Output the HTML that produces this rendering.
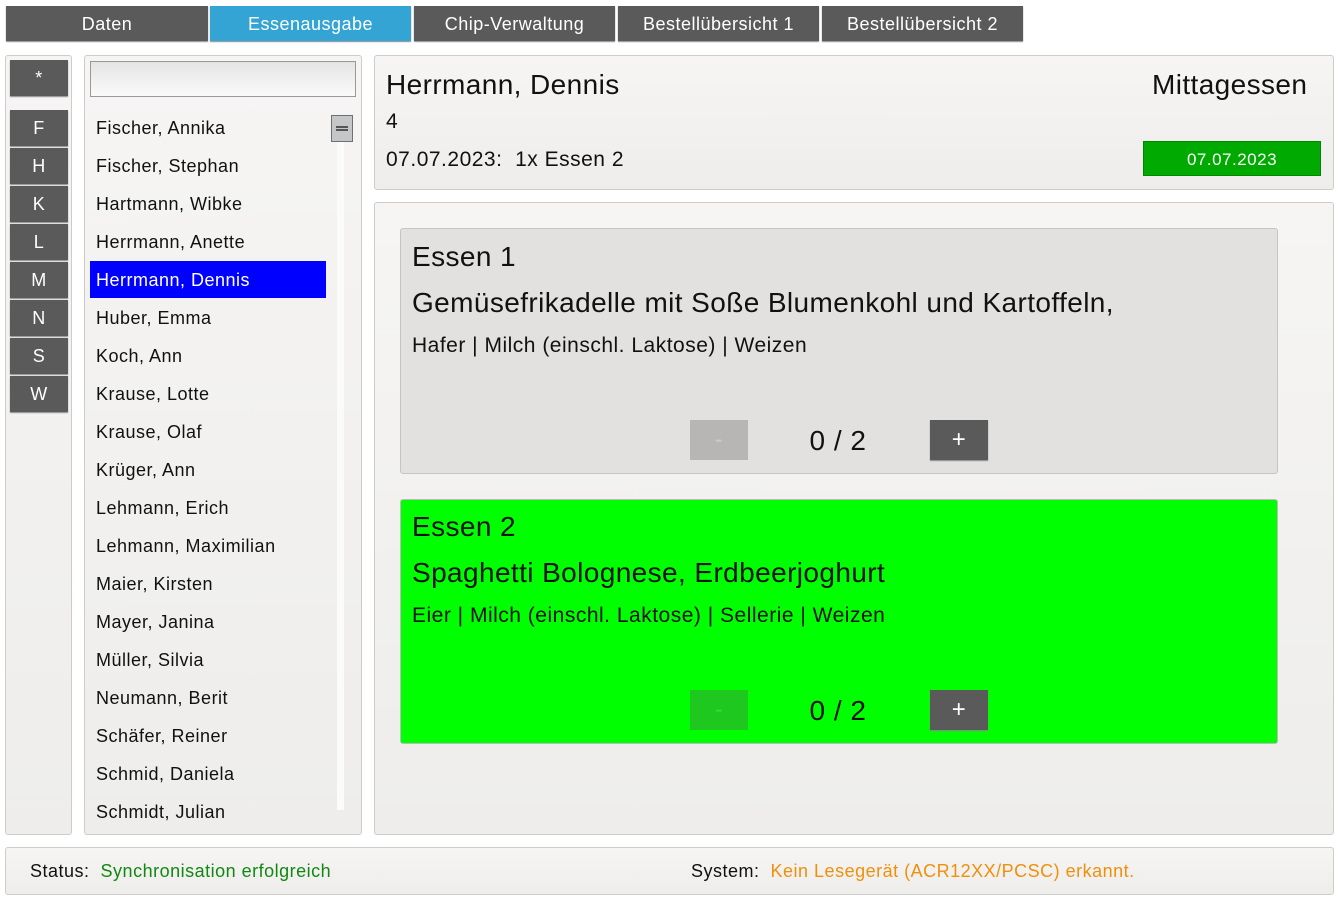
<!DOCTYPE html><html><head><meta charset="utf-8"><style>
*{box-sizing:border-box;margin:0;padding:0}
body{width:1338px;height:899px;background:#fff;font-family:"Liberation Sans",sans-serif;position:relative;overflow:hidden;color:#111;letter-spacing:0.5px}
.a{position:absolute}
.big{letter-spacing:0.4px}
.tab{position:absolute;top:6px;height:35px;background:#5a5a5a;color:#fff;font-size:18px;text-align:center;line-height:37px;box-shadow:0 1px 1px #888}
.panel{position:absolute;background:linear-gradient(#f6f5f4,#eeedeb);border:1px solid #cfccc8;border-radius:3px}
.lb{position:absolute;left:10px;width:58px;height:36px;background:#5a5a5a;color:#fff;font-size:18px;text-align:center;line-height:37px;box-shadow:0 1px 1px #888}
.row{position:absolute;left:90px;width:236px;height:37px;line-height:39px;padding-left:6px;font-size:18px}
.btn{position:absolute;width:58px;height:40px;font-size:24px;text-align:center;line-height:40px;color:#fff}
</style></head><body>
<div class="tab" style="left:6px;width:202px">Daten</div>
<div class="tab" style="left:210px;width:201px;background:#33a4d4">Essenausgabe</div>
<div class="tab" style="left:414px;width:201px">Chip-Verwaltung</div>
<div class="tab" style="left:618px;width:201px">Bestellübersicht 1</div>
<div class="tab" style="left:822px;width:201px">Bestellübersicht 2</div>

<div class="panel" style="left:5px;top:55px;width:67px;height:780px"></div>
<div class="lb" style="top:60px">*</div>
<div class="lb" style="top:110px">F</div>
<div class="lb" style="top:148px">H</div>
<div class="lb" style="top:186px">K</div>
<div class="lb" style="top:224px">L</div>
<div class="lb" style="top:262px">M</div>
<div class="lb" style="top:300px">N</div>
<div class="lb" style="top:338px">S</div>
<div class="lb" style="top:376px">W</div>

<div class="panel" style="left:84px;top:55px;width:278px;height:780px"></div>
<div class="a" style="left:90px;top:61px;width:266px;height:36px;border:1px solid #999;background:linear-gradient(#e4e4e4,#fafafa)"></div>
<div class="a" style="left:337px;top:141px;width:7px;height:669px;background:#fbfbfb"></div>
<div class="a" style="left:331px;top:115px;width:22px;height:27px;background:#c4c6c8;border:1px solid #6e7072"><div class="a" style="left:4px;top:10px;width:12px;height:5px;border-top:2px solid #555;border-bottom:2px solid #555"></div></div>
<div class="row" style="top:109px">Fischer, Annika</div>
<div class="row" style="top:147px">Fischer, Stephan</div>
<div class="row" style="top:185px">Hartmann, Wibke</div>
<div class="row" style="top:223px">Herrmann, Anette</div>
<div class="row" style="top:261px;background:#0000ff;color:#fff">Herrmann, Dennis</div>
<div class="row" style="top:299px">Huber, Emma</div>
<div class="row" style="top:337px">Koch, Ann</div>
<div class="row" style="top:375px">Krause, Lotte</div>
<div class="row" style="top:413px">Krause, Olaf</div>
<div class="row" style="top:451px">Krüger, Ann</div>
<div class="row" style="top:489px">Lehmann, Erich</div>
<div class="row" style="top:527px">Lehmann, Maximilian</div>
<div class="row" style="top:565px">Maier, Kirsten</div>
<div class="row" style="top:603px">Mayer, Janina</div>
<div class="row" style="top:641px">Müller, Silvia</div>
<div class="row" style="top:679px">Neumann, Berit</div>
<div class="row" style="top:717px">Schäfer, Reiner</div>
<div class="row" style="top:755px">Schmid, Daniela</div>
<div class="row" style="top:793px">Schmidt, Julian</div>

<div class="panel" style="left:374px;top:55px;width:960px;height:135px"></div>
<div class="a big" style="left:386px;top:69px;font-size:28px">Herrmann, Dennis</div>
<div class="a big" style="left:1152px;top:69px;font-size:28px">Mittagessen</div>
<div class="a" style="left:386px;top:110px;font-size:21px">4</div>
<div class="a" style="left:386px;top:148px;font-size:21px">07.07.2023:&nbsp; 1x Essen 2</div>
<div class="a" style="left:1143px;top:141px;width:178px;height:35px;background:#00aa00;border:1px solid #008800;color:#fff;font-size:17px;text-align:center;line-height:35px">07.07.2023</div>

<div class="panel" style="left:374px;top:202px;width:960px;height:633px"></div>
<div class="a" style="left:400px;top:228px;width:878px;height:246px;background:#e2e1df;border:1px solid #c8c5c1;border-radius:3px"></div>
<div class="a big" style="left:412px;top:241px;font-size:28px">Essen 1</div>
<div class="a big" style="left:412px;top:287px;font-size:28px">Gemüsefrikadelle mit Soße Blumenkohl und Kartoffeln,</div>
<div class="a" style="left:412px;top:334px;font-size:21px">Hafer | Milch (einschl. Laktose) | Weizen</div>
<div class="btn" style="left:690px;top:420px;background:#b7b6b4;color:#ccc">-</div>
<div class="a" style="left:780px;top:425px;width:116px;text-align:center;font-size:28px">0 / 2</div>
<div class="btn" style="left:930px;top:420px;background:#5a5a5a;box-shadow:0 1px 1px #888">+</div>

<div class="a" style="left:400px;top:499px;width:878px;height:245px;background:#00ff00;border:1px solid #bbb;border-radius:3px"></div>
<div class="a big" style="left:412px;top:511px;font-size:28px">Essen 2</div>
<div class="a big" style="left:412px;top:557px;font-size:28px">Spaghetti Bolognese, Erdbeerjoghurt</div>
<div class="a" style="left:412px;top:604px;font-size:21px">Eier | Milch (einschl. Laktose) | Sellerie | Weizen</div>
<div class="btn" style="left:690px;top:690px;background:#1ec81e;color:#3d3">-</div>
<div class="a" style="left:780px;top:695px;width:116px;text-align:center;font-size:28px">0 / 2</div>
<div class="btn" style="left:930px;top:690px;background:#5a5a5a;box-shadow:0 1px 1px #888">+</div>

<div class="panel" style="left:5px;top:847px;width:1329px;height:48px"></div>
<div class="a" style="left:30px;top:861px;font-size:18px">Status:&nbsp; <span style="color:#118811">Synchronisation erfolgreich</span></div>
<div class="a" style="left:691px;top:861px;font-size:18px">System:&nbsp; <span style="color:#f0900a">Kein Lesegerät (ACR12XX/PCSC) erkannt.</span></div>
</body></html>
